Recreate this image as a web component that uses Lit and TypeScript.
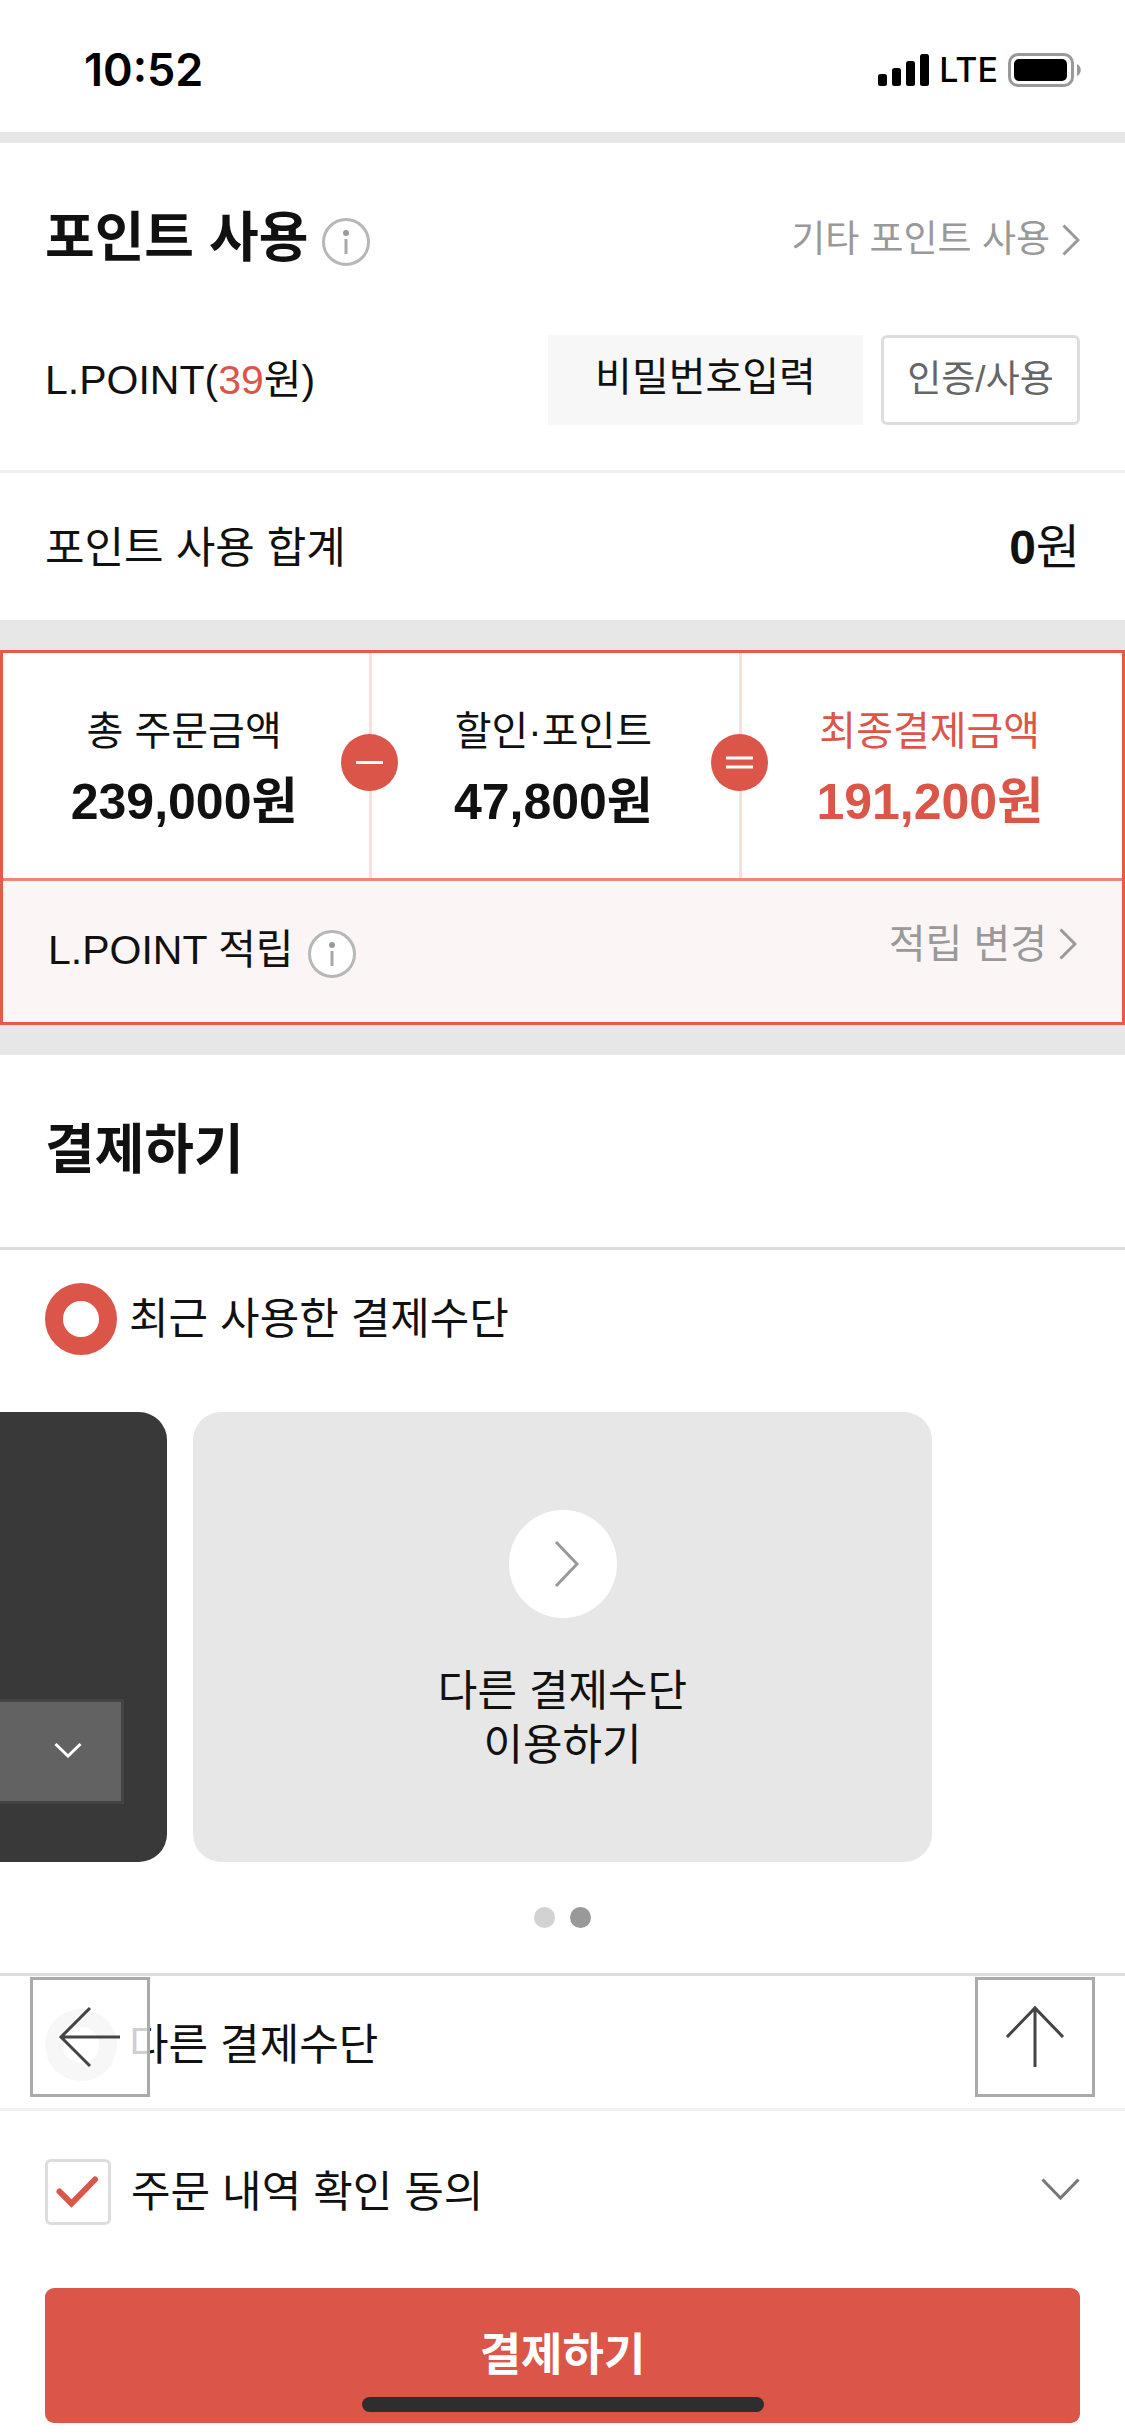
import { LitElement, html, css, svg } from "lit";
import { customElement, state } from "lit/decorators.js";

const infoIcon = html`
  <svg class="info-icon" viewBox="0 0 48 48" aria-hidden="true">
    <circle cx="24" cy="24" r="22.5" fill="#fff" stroke="#b7b7b7" stroke-width="3" />
    <circle cx="24" cy="15" r="3" fill="#9a9a9a" />
    <path d="M24 21V36" fill="none" stroke="#a8a8a8" stroke-width="3" />
  </svg>
`;

const chevronRight = html`
  <svg class="chevron-right" viewBox="0 0 18 32" aria-hidden="true">
    <path d="M1.5 1.5L16 16L1.5 30.5" fill="none" stroke="#999" stroke-width="3" />
  </svg>
`;

const minusSign = svg`<path d="M15 28.5H42" stroke="#fff" stroke-width="3" />`;
const equalSign = svg`<path d="M15 24H42M15 33H42" stroke="#fff" stroke-width="3" />`;

interface Amount {
  label: string;
  value: string;
  sign?: unknown;
  final?: boolean;
}

const amounts: Amount[] = [
  { label: "총 주문금액", value: "239,000원", sign: minusSign },
  { label: "할인·포인트", value: "47,800원", sign: equalSign },
  { label: "최종결제금액", value: "191,200원", final: true },
];

@customElement("app-root")
export class AppRoot extends LitElement {
  @state() private method = "recent";
  @state() private agreed = true;

  static styles = css`
    :host {
      display: block;
      background: #fff;
      color: #111;
      font-family: "Liberation Sans", "Noto Sans CJK KR", sans-serif;
      font-size: 43px;
      line-height: 60px;
    }
    * {
      box-sizing: border-box;
    }
    svg {
      display: block;
      flex: none;
    }
    h2,
    p,
    dl,
    dd,
    dt {
      margin: 0;
      font-weight: 400;
    }
    a {
      color: inherit;
      text-decoration: none;
    }
    button,
    input,
    select {
      margin: 0;
      padding: 0;
      border: 0;
      border-radius: 0;
      background: none;
      color: inherit;
      font: inherit;
      appearance: none;
    }
    .status {
      display: flex;
      justify-content: space-between;
      align-items: center;
      height: 132px;
      padding: 8px 44px 0 84px;
      color: #000;
      font-family: Inter, sans-serif;
    }
    .clock {
      font-size: 45px;
      font-weight: 600;
    }
    .indicators {
      display: flex;
      align-items: center;
      gap: 10px;
      font-size: 34px;
      font-weight: 500;
    }
    .signal {
      width: 51px;
      height: 32px;
    }
    .battery {
      width: 73px;
      height: 34px;
    }
    .band {
      height: 30px;
      background: #e7e7e7;
    }
    .band-thin {
      height: 11px;
    }
    .row {
      display: flex;
      align-items: center;
      justify-content: space-between;
      padding: 0 45px;
    }
    .title-row {
      padding-top: 65px;
      padding-bottom: 67px;
    }
    .title {
      font-size: 54px;
      font-weight: 700;
    }
    .with-info {
      display: flex;
      align-items: center;
      gap: 14px;
    }
    .latin {
      font-size: 41px;
    }
    .info {
      display: block;
      margin-top: 8px;
    }
    .info-icon {
      width: 48px;
      height: 48px;
    }
    .more {
      display: flex;
      align-items: center;
      gap: 12px;
      line-height: 48px;
      color: #999;
    }
    .more-small {
      padding-top: 3px;
      font-size: 37px;
    }
    .more-medium {
      font-size: 40px;
    }
    .chevron-right {
      width: 18px;
      height: 32px;
    }
    .point-row {
      padding-bottom: 45px;
      border-bottom: 3px solid #f0f0f0;
    }
    .red {
      color: #db5548;
    }
    .point-form {
      display: flex;
      gap: 18px;
    }
    .password {
      width: 315px;
      height: 90px;
      padding-bottom: 6px;
      background: #f7f7f7;
      font-size: 40px;
      text-align: center;
    }
    .password::placeholder {
      color: #111;
      opacity: 1;
    }
    .verify {
      width: 199px;
      height: 90px;
      border: 3px solid #ddd;
      border-radius: 6px;
      color: #666;
      font-size: 37px;
    }
    .sum-row {
      padding-top: 45px;
      padding-bottom: 42px;
    }
    .sum {
      font-size: 48px;
    }
    .summary {
      border: 3px solid #e75949;
    }
    .amounts {
      display: grid;
      grid-template-columns: 33% 33% 1fr;
    }
    .amount {
      position: relative;
      padding: 51px 4px 32px 0;
      text-align: center;
    }
    .amount:not(.final) {
      border-right: 3px solid #fbdfdc;
    }
    .final {
      color: #db5548;
    }
    .amount-label {
      font-size: 40px;
      line-height: 54px;
    }
    .amount-value {
      font-size: 50px;
      line-height: 88px;
      font-weight: 700;
    }
    .sign {
      position: absolute;
      top: 81px;
      right: -29px;
      z-index: 1;
      width: 57px;
      height: 57px;
    }
    .earn {
      display: flex;
      align-items: flex-start;
      justify-content: space-between;
      padding: 39px 45px 42px 45px;
      border-top: 3px solid #ee8678;
      background: #fbf5f5;
    }
    .method {
      display: flex;
      align-items: center;
      gap: 12px;
      padding: 33px 45px 27px;
    }
    .method-first {
      padding-bottom: 57px;
      border-top: 3px solid #ddd;
    }
    .method-other {
      position: relative;
      border-top: 3px solid #ddd;
      border-bottom: 3px solid #f0f0f0;
    }
    .radio {
      flex: none;
      width: 72px;
      height: 72px;
      border: 18px solid #d7d7d7;
      border-radius: 50%;
      background: #fff;
    }
    .radio:checked {
      border-color: #db5548;
    }
    .cards {
      display: grid;
      grid-template-columns: 1fr minmax(0, 739px) 1fr;
      gap: 26px;
    }
    .card-dark {
      display: flex;
      align-items: flex-end;
      min-height: 450px;
      padding: 0 43px 58px 0;
      border-radius: 0 28px 28px 0;
      background: #393939;
    }
    .plan {
      position: relative;
      width: 100%;
    }
    .plan-select {
      display: block;
      width: 100%;
      height: 105px;
      border: 3px solid #444;
      border-left: 0;
      background: #626262;
    }
    .plan-icon {
      position: absolute;
      top: 43px;
      right: 42px;
      width: 28px;
      height: 16px;
      pointer-events: none;
    }
    .card-more {
      display: flex;
      flex-direction: column;
      align-items: center;
      gap: 46px;
      padding: 98px 0 88px;
      border-radius: 28px;
      background: #e7e7e7;
      line-height: 54px;
      text-align: center;
    }
    .card-icon {
      width: 108px;
      height: 108px;
    }
    .dots {
      display: flex;
      justify-content: center;
      gap: 15px;
      padding: 45px 0;
    }
    .dot {
      width: 21px;
      height: 21px;
      border-radius: 50%;
      background: #d2d2d2;
    }
    .dot-on {
      background: #999;
    }
    .float {
      position: absolute;
      top: 1px;
      width: 120px;
      height: 120px;
      border: 3px solid #aaa;
      background: rgba(255, 255, 255, 0.8);
    }
    .float-back {
      left: 30px;
    }
    .float-top {
      right: 30px;
    }
    .float-icon {
      width: 114px;
      height: 114px;
    }
    .agree {
      padding-top: 48px;
      padding-bottom: 63px;
    }
    .agree-main {
      display: flex;
      align-items: center;
      gap: 20px;
    }
    .tick {
      position: relative;
      width: 66px;
      height: 66px;
    }
    .tick-box {
      display: block;
      width: 66px;
      height: 66px;
      border: 3px solid #ddd;
      border-radius: 6px;
      background: #fff;
    }
    .tick-mark {
      position: absolute;
      inset: 0;
      pointer-events: none;
    }
    .expand {
      padding-bottom: 6px;
    }
    .expand-icon {
      width: 39px;
      height: 24px;
    }
    .pay {
      position: relative;
      padding: 0 45px 13px;
    }
    .pay-button {
      display: block;
      width: 100%;
      height: 135px;
      border-radius: 9px;
      background: #db5548;
      color: #fff;
      font-size: 45px;
      font-weight: 700;
    }
    .home-bar {
      position: absolute;
      bottom: 24px;
      left: 50%;
      width: 402px;
      height: 15px;
      margin-left: -201px;
      border-radius: 8px;
      background: #2e2e2e;
    }
  `;

  private renderAmount(a: Amount) {
    return html`
      <div class="amount ${a.final ? "final" : ""}">
        <dt class="amount-label">${a.label}</dt>
        <dd class="amount-value">${a.value}</dd>
        ${a.sign
          ? html`<svg class="sign" viewBox="0 0 57 57" aria-hidden="true">
              <circle cx="28.5" cy="28.5" r="28.5" fill="#db5548" />
              ${a.sign}
            </svg>`
          : ""}
      </div>
    `;
  }

  render() {
    return html`
      <header class="status">
        <span class="clock">10:52</span>
        <div class="indicators">
          <svg class="signal" viewBox="0 0 51 32" aria-hidden="true">
            <rect x="0" y="20" width="9" height="12" rx="2.5" />
            <rect x="14" y="14" width="9" height="18" rx="2.5" />
            <rect x="28" y="7" width="9" height="25" rx="2.5" />
            <rect x="42" y="0" width="9" height="32" rx="2.5" />
          </svg>
          <span>LTE</span>
          <svg class="battery" viewBox="0 0 73 34" aria-hidden="true">
            <rect x="1.5" y="1.5" width="63" height="31" rx="8.5" fill="none" stroke="#999" stroke-width="3" />
            <rect x="6" y="6" width="53" height="22" rx="5" />
            <path d="M69 11C74 13 74 21 69 23Z" fill="#999" />
          </svg>
        </div>
      </header>
      <div class="band band-thin"></div>

      <section>
        <div class="row title-row">
          <div class="with-info">
            <h2 class="title">포인트 사용</h2>
            <button class="info" type="button" aria-label="포인트 사용 안내">${infoIcon}</button>
          </div>
          <a class="more more-small" href="#points">기타 포인트 사용${chevronRight}</a>
        </div>
        <div class="row point-row">
          <label class="latin" for="point-password">L.POINT(<span class="red">39</span>원)</label>
          <div class="point-form">
            <input id="point-password" class="password" type="password" placeholder="비밀번호입력" />
            <button class="verify" type="button">인증/사용</button>
          </div>
        </div>
        <div class="row sum-row">
          <span>포인트 사용 합계</span>
          <span class="sum"><b>0</b>원</span>
        </div>
      </section>
      <div class="band"></div>

      <section class="summary">
        <dl class="amounts">${amounts.map((a) => this.renderAmount(a))}</dl>
        <div class="earn">
          <div class="with-info">
            <span class="latin">L.POINT 적립</span>
            <button class="info" type="button" aria-label="L.POINT 적립 안내">${infoIcon}</button>
          </div>
          <a class="more more-medium" href="#earn">적립 변경${chevronRight}</a>
        </div>
      </section>
      <div class="band"></div>

      <section>
        <div class="row title-row">
          <h2 class="title">결제하기</h2>
        </div>
        <div class="method method-first">
          <input
            id="method-recent"
            class="radio"
            type="radio"
            name="method"
            .checked=${this.method === "recent"}
            @change=${() => (this.method = "recent")}
          />
          <label for="method-recent">최근 사용한 결제수단</label>
        </div>
        <div class="cards">
          <div class="card-dark">
            <div class="plan">
              <select class="plan-select" aria-label="할부 선택"></select>
              <svg class="plan-icon" viewBox="0 0 28 16" aria-hidden="true">
                <path d="M1.5 2L14 14L26.5 2" fill="none" stroke="#fff" stroke-width="3" />
              </svg>
            </div>
          </div>
          <a class="card-more" href="#methods">
            <svg class="card-icon" viewBox="0 0 108 108" aria-hidden="true">
              <circle cx="54" cy="54" r="54" fill="#fff" />
              <path d="M47 32L68 54L47 76" fill="none" stroke="#999" stroke-width="3" />
            </svg>
            <span>다른 결제수단<br />이용하기</span>
          </a>
        </div>
        <div class="dots"><i class="dot"></i><i class="dot dot-on"></i></div>
        <div class="method method-other">
          <input
            id="method-other"
            class="radio"
            type="radio"
            name="method"
            .checked=${this.method === "other"}
            @change=${() => (this.method = "other")}
          />
          <label for="method-other">다른 결제수단</label>
          <button class="float float-back" type="button" aria-label="뒤로">
            <svg class="float-icon" viewBox="0 0 114 114" aria-hidden="true">
              <path d="M87 57H28M57 28L28 57L57 86" fill="none" stroke="#444" stroke-width="3" />
            </svg>
          </button>
          <button class="float float-top" type="button" aria-label="맨 위로">
            <svg class="float-icon" viewBox="0 0 114 114" aria-hidden="true">
              <path d="M57 87V28M29 57L57 28L85 57" fill="none" stroke="#444" stroke-width="3" />
            </svg>
          </button>
        </div>
      </section>

      <section>
        <div class="row agree">
          <div class="agree-main">
            <div class="tick">
              <input
                id="agree"
                class="tick-box"
                type="checkbox"
                .checked=${this.agreed}
                @change=${(e: Event) => (this.agreed = (e.target as HTMLInputElement).checked)}
              />
              ${this.agreed
                ? html`<svg class="tick-mark" viewBox="0 0 66 66" aria-hidden="true">
                    <path
                      d="M14.5 32.5L26.5 44.5L50 20.5"
                      fill="none"
                      stroke="#db5548"
                      stroke-width="6"
                      stroke-linecap="round"
                    />
                  </svg>`
                : ""}
            </div>
            <label for="agree">주문 내역 확인 동의</label>
          </div>
          <button class="expand" type="button" aria-label="주문 내역 펼치기">
            <svg class="expand-icon" viewBox="0 0 39 24" aria-hidden="true">
              <path d="M1.5 2.5L19.5 21L37.5 2.5" fill="none" stroke="#777" stroke-width="3" />
            </svg>
          </button>
        </div>
        <div class="pay">
          <button class="pay-button" type="button">결제하기</button>
          <div class="home-bar"></div>
        </div>
      </section>
    `;
  }
}
